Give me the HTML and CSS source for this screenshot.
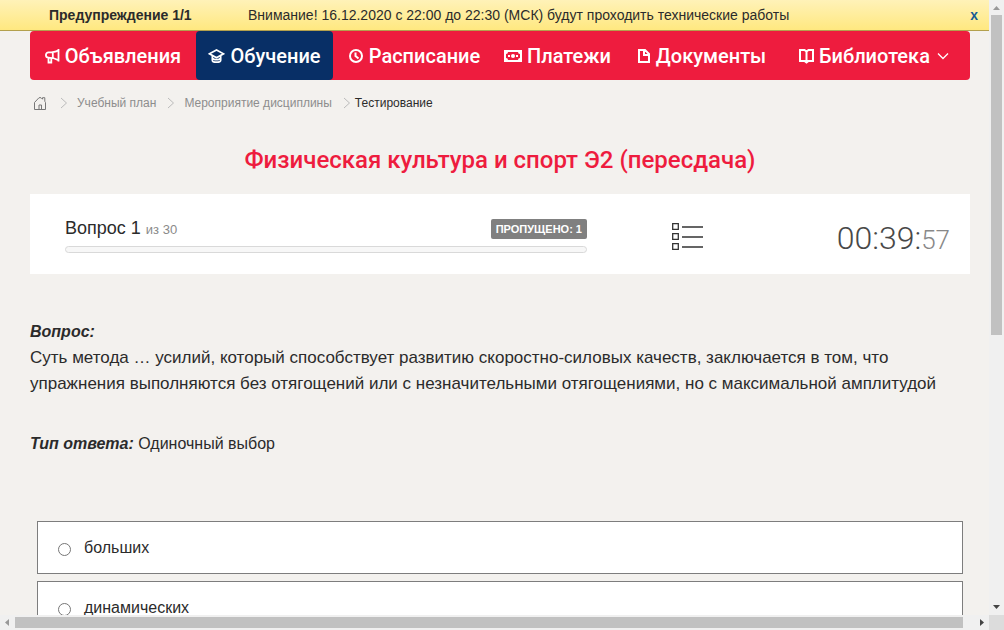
FILE: index.html
```html
<!DOCTYPE html>
<html lang="ru">
<head>
<meta charset="utf-8">
<title>Тестирование</title>
<link rel="stylesheet" href="styles.css">
</head>
<body>
<div class="window">
  <div class="view">
    <div class="notice">
      <strong class="notice-title">Предупреждение 1/1</strong>
      <span class="notice-text">Внимание! 16.12.2020 с 22:00 до 22:30 (МСК) будут проходить технические работы</span>
      <a class="notice-close" href="#">x</a>
    </div>
    <div class="page">
      <nav class="menu">
        <a class="menu-item" href="#">
          <svg width="15" height="16" viewBox="0 0 15 16" fill="none" stroke="currentColor" stroke-width="1.800"><path d="M13.500 1v12.500M13 2.500C10.500 4 8 4.400 3.500 4.400a2.600 2.600 0 0 0 0 5.200C8 9.600 10.500 10.500 13 12M7.800 4.500v5M3.500 9.800v4.700h2.800V10"/></svg>
          <span>Объявления</span></a>
        <a class="menu-item active" href="#">
          <svg width="17" height="16" viewBox="0 0 17 16" fill="none" stroke="currentColor" stroke-width="1.700"><path d="M1.500 5.800 8.500 2 15.500 5.800 8.500 9.800zM4.300 8v4.200c0 1.200 1.200 2 4.200 2s4.200-.8 4.200-2V8M4.300 9.800c1.200 2.600 7.200 2.600 8.400 0"/></svg>
          <span>Обучение</span></a>
        <a class="menu-item" href="#">
          <svg width="15" height="16" viewBox="0 0 15 16" fill="none" stroke="currentColor" stroke-width="2"><circle cx="7" cy="8" r="6"/><path d="M6.500 4.500V8l3 2.500"/></svg>
          <span>Расписание</span></a>
        <a class="menu-item" href="#">
          <svg width="18" height="16" viewBox="0 0 18 16" fill="currentColor"><path fill-rule="evenodd" d="M0 2h18v12H0zM4 4a2 2 0 0 1-2 2v4a2 2 0 0 1 2 2h10a2 2 0 0 1 2-2V6a2 2 0 0 1-2-2z"/><circle cx="9" cy="8" r="2"/><path d="M4 7h2v2H4zM12 7h2v2h-2z"/></svg>
          <span>Платежи</span></a>
        <a class="menu-item" href="#">
          <svg width="14" height="16" viewBox="0 0 14 16" fill="none" stroke="currentColor" stroke-width="2"><path d="M2 2h6l4 4v8H2zM7 2v5h5"/></svg>
          <span>Документы</span></a>
        <a class="menu-item" href="#">
          <svg width="15" height="16" viewBox="0 0 15 16" fill="none" stroke="currentColor" stroke-width="2"><path d="M1 2h4.500l2 1.500 2-1.500H14v11H9.500l-2 1.500-2-1.500H1zM7.500 3v11"/></svg>
          <span>Библиотека</span>
          <svg class="caret" width="12" height="8" viewBox="0 0 12 8" fill="none" stroke="currentColor" stroke-width="1.300"><path d="m1 1.500 5 5 5-5"/></svg></a>
      </nav>

      <div class="crumbs">
        <a class="crumb-home" href="#" aria-label="Главная"><svg width="14" height="13" viewBox="0 0 14 13" fill="none" stroke="currentColor"><path d="M1.500 12.500V5.500L6 .7h2l1.500 1.500V.7h2.300v3.600l.7 1.200v7zM6 12V8h2.500v4"/></svg></a>
        <svg class="sep" width="8" height="12" viewBox="0 0 8 12"><path d="m1 1 5.500 5L1 11"/></svg>
        <a class="crumb" href="#">Учебный план</a>
        <svg class="sep" width="8" height="12" viewBox="0 0 8 12"><path d="m1 1 5.500 5L1 11"/></svg>
        <a class="crumb" href="#">Мероприятие дисциплины</a>
        <svg class="sep sep-last" width="8" height="12" viewBox="0 0 8 12"><path d="m1 1 5.500 5L1 11"/></svg>
        <span class="crumb-current">Тестирование</span>
      </div>

      <h1 class="title">Физическая культура и спорт Э2 (пересдача)</h1>

      <section class="status">
        <div class="progress-box">
          <div class="progress-head">
            <span class="question-number">Вопрос 1 <small>из 30</small></span>
            <span class="skipped">ПРОПУЩЕНО: 1</span>
          </div>
          <div class="progress" role="progressbar" aria-label="Прогресс" aria-valuenow="0"></div>
        </div>
        <button class="list-button" type="button" aria-label="Список вопросов"><svg width="31" height="28" viewBox="0 0 31 28" fill="none" stroke="currentColor" stroke-width="1.300"><path d="M.7.7H6.300V6.300H.7zM.7 10.700H6.300v5.600H.7zM.7 20.700H6.300v5.600H.7zM10 4h21M10 14h21M10 24h21"/></svg></button>
        <div class="timer">00:39:<small>57</small></div>
      </section>

      <section class="question">
        <strong class="label">Вопрос:</strong>
        <p class="question-text">Суть метода … усилий, который способствует развитию скоростно-силовых качеств, заключается в том, что упражнения выполняются без отягощений или с незначительными отягощениями, но с максимальной амплитудой</p>
        <p class="answer-type"><strong class="label">Тип ответа:</strong> Одиночный выбор</p>
      </section>

      <div class="answers">
        <label class="answer"><input type="radio" name="answer"><span>больших</span></label>
        <label class="answer"><input type="radio" name="answer"><span>динамических</span></label>
      </div>
    </div>
  </div>

  <div class="vbar">
    <svg class="arrow faded" width="15" height="15" viewBox="0 0 15 15"><path d="M4 10 7.500 6 11 10z"/></svg>
    <div class="vthumb"></div>
    <div class="vtrack"></div>
    <svg class="arrow" width="15" height="15" viewBox="0 0 15 15"><path d="M4 5 7.500 9 11 5z"/></svg>
  </div>
  <div class="hbar">
    <svg class="arrow faded" width="15" height="15" viewBox="0 0 15 15"><path d="M9 4 5 7.500 9 11z"/></svg>
    <div class="hthumb"></div>
    <div class="htrack"></div>
    <svg class="arrow" width="15" height="15" viewBox="0 0 15 15"><path d="M6 4 10 7.500 6 11z"/></svg>
  </div>
  <div class="corner"></div>
</div>
</body>
</html>
```
FILE: styles.css
```css
* {
  box-sizing: border-box;
}

body {
  margin: 0;
  background: #f3f1ee;
  color: #2b2b2b;
  font: 16px/26px "Liberation Sans", Arial, sans-serif;
}

.window {
  display: grid;
  grid-template: minmax(0, 1fr) 15px / minmax(0, 1fr) 15px;
  height: 100vh;
}

.view {
  overflow: hidden;
}

.notice {
  display: flex;
  height: 31px;
  padding: 0 11px 0 49px;
  border-bottom: 1px solid #b3a04d;
  background: linear-gradient(#fff2b8, #ffe880);
  font-size: 14px;
  line-height: 30px;
  white-space: nowrap;
}

.notice-title {
  flex: 0 0 199px;
}

.notice-text {
  flex: 1;
}

.notice-close {
  color: #175a94;
  font-weight: bold;
  text-decoration: none;
}

.page {
  padding: 0 19px 0 30px;
}

.menu {
  display: grid;
  grid-template-columns: 166fr 137fr 163fr 123fr 165fr 180fr;
  height: 49px;
  padding-right: 6px;
  border-radius: 4px;
  background: #ee1c3e;
}

.menu-item {
  display: flex;
  align-items: center;
  justify-content: center;
  gap: 5px;
  border-radius: 4px;
  color: #fff;
  font: 500 20px/48px Roboto, sans-serif;
  text-decoration: none;
  white-space: nowrap;
}

.menu-item svg {
  flex: none;
}

.menu-item.active {
  background: #082f66;
}

.caret {
  margin-left: 2px;
}

.crumbs {
  display: flex;
  align-items: center;
  height: 46px;
  padding-left: 3px;
  font-size: 12px;
  color: #8d8d8d;
}

.crumb-home {
  display: flex;
  color: #777;
}

.sep {
  margin: 0 9px 0 13px;
  fill: none;
  stroke: #bbb;
}

.crumb {
  color: inherit;
  text-decoration: none;
}

.crumb + .sep {
  margin-left: 11px;
}

.crumb + .sep-last {
  margin-right: 4px;
}

.crumb-current {
  color: #2b2b2b;
}

.title {
  margin: 19px 0 18px;
  color: #ee1c3e;
  font: 500 24px/31px Roboto, sans-serif;
  text-align: center;
}

.status {
  display: flex;
  align-items: center;
  height: 80px;
  padding: 0 20px 0 35px;
  background: #fff;
}

.progress-box {
  flex: 0 1 522px;
  padding-top: 3px;
}

.progress-head {
  display: flex;
  align-items: center;
  justify-content: space-between;
  height: 20px;
  margin-bottom: 7px;
}

.question-number {
  font-size: 18px;
  line-height: 28px;
}

.question-number small {
  color: #8a8a8a;
  font-size: 13px;
}

.skipped {
  padding: 0 5px;
  border-radius: 2px;
  background: #808080;
  color: #fff;
  font-size: 11px;
  font-weight: bold;
  line-height: 20px;
}

.progress {
  height: 7px;
  border: 1px solid #d9d9d9;
  border-radius: 4px;
  background: #f7f7f7;
}

.list-button {
  display: flex;
  margin: 0 auto 0 85px;
  padding: 5px 0 0;
  border: 0;
  background: none;
  color: #333;
}

.timer {
  flex: none;
  padding-top: 10px;
  color: #484848;
  font: 300 32px/40px Roboto, sans-serif;
}

.timer small {
  color: #888;
  font-size: 26px;
}

.question {
  padding-top: 45px;
}

.label {
  font-style: italic;
}

.question-text {
  margin: 0;
  font-size: 17px;
}

.answer-type {
  margin: 34px 0 0;
}

.answers {
  display: grid;
  gap: 7px;
  margin: 64px 7px 0;
}

.answer {
  display: flex;
  align-items: center;
  gap: 13px;
  height: 53px;
  padding-left: 20px;
  border: 1px solid #7d7d7d;
  background: #fff;
}

.answer input {
  width: 13px;
  height: 13px;
  margin: 4px 0 0;
}

.vbar,
.hbar {
  display: flex;
  background: #f0f0f0;
}

.vbar {
  flex-direction: column;
}

.arrow {
  flex: none;
  fill: #444;
}

.faded {
  fill: #999;
}

.vthumb {
  flex: 320;
  margin: 0 2px;
  background: #c1c1c1;
}

.vtrack {
  flex: 265;
}

.hthumb {
  flex: 948;
  margin: 2px 0;
  background: #c1c1c1;
}

.htrack {
  flex: 11;
}

.corner {
  background: #dcdcdc;
}
```
